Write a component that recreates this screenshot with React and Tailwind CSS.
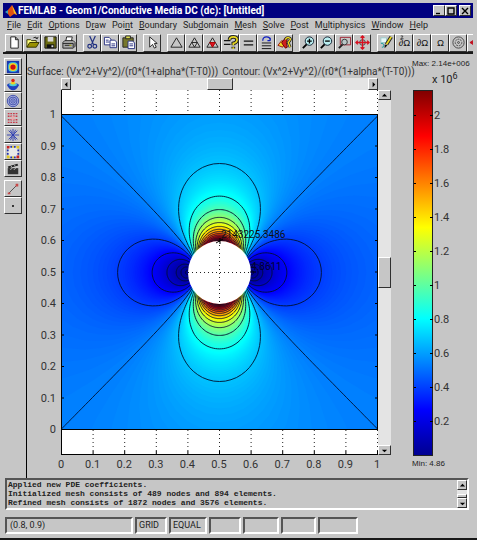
import React from "react";

const SANS = "font-['Roboto','Liberation_Sans',sans-serif]";
const RAISED =
  "border border-t-white border-l-white border-r-[#303030] border-b-[#303030] bg-[#c6c6c6]";
const SUNKEN =
  "border-2 border-t-[#555] border-l-[#555] border-r-white border-b-white";

/* ---------- field around a circular hole in a uniform current ---------- */
const CX = 192.5;
const CY = 182.5;
const R = 31.5;
const LEFT = 34;
const RIGHT = 351;
const TOP = 25;
const BOTTOM = 340;

function jet(t) {
  const ch = (c) =>
    Math.round(255 * Math.max(0, Math.min(1, 1.5 - Math.abs(4 * t - c))));
  return `rgb(${ch(3)},${ch(2)},${ch(1)})`;
}

// Colour of a field level, where 1 is the undisturbed current.
function shade(level) {
  const d = level - 1;
  return jet(0.25 + 0.4 * d + (d < 0 ? 0.17 : -0.052) * d * d);
}

// One point of the level line |1 - R²/z²|² = s², at phase phi.
function point(s, phi, upper) {
  let re = s * Math.cos(phi) - 1;
  let im = s * Math.sin(phi);
  if (!upper) {
    re = -re;
    im = -im;
  }
  const mod = Math.min(R / Math.sqrt(Math.hypot(re, im)), 1500);
  const arg = -Math.atan2(im, re) / 2;
  const x = mod * Math.cos(arg);
  const y = mod * Math.sin(arg);
  return upper ? [-y, x] : [x, y];
}

function lobe(level) {
  const s = Math.sqrt(level);
  const upper = level > 1;
  const max = Math.acos(Math.min(1, s / 2));
  const pts = [];
  for (let i = -36; i <= 36; i++) {
    const t = i / 36;
    pts.push(point(s, max * (0.3 * t + 0.7 * t * t * t), upper));
  }
  const path = (k) =>
    "M" +
    pts
      .map(([x, y]) => `${(CX + k * x).toFixed(1)} ${(CY + k * y).toFixed(1)}`)
      .join("L");
  return path(1) + path(-1);
}

function diagonals() {
  let d = "";
  for (const sx of [1, -1]) {
    for (const sy of [1, -1]) {
      const pts = [];
      for (let i = 0; i <= 40; i++) {
        const r = R + (i / 40) * 196;
        const th = Math.acos((R * R) / (2 * r * r)) / 2;
        pts.push(
          `${(CX + sx * r * Math.cos(th)).toFixed(1)} ${(CY + sy * r * Math.sin(th)).toFixed(1)}`
        );
      }
      d += "M" + pts.join("L");
    }
  }
  return d;
}

const BANDS = [];
for (let c = 0.99; c > 0.01; c -= 0.01) BANDS.push(c);
for (let c = 1.01; c < 3.98; c += c < 1.4 ? 0.01 : 0.03) BANDS.push(c);
const LINES = [0.02, 0.11, 0.22, 0.41, 0.61, 0.818];
for (let k = 0; k < 15; k++) LINES.push(1.174 + k * 0.195);
const TENTHS = [0, 1, 2, 3, 4, 5, 6, 7, 8, 9, 10];

function Plot() {
  return (
    <svg
      width="351"
      height="388"
      className={`block shrink-0 overflow-visible ${SANS}`}
      role="img"
      aria-label="Surface and contour plot"
    >
      <defs>
        <clipPath id="domain">
          <rect x={LEFT} y={TOP} width={RIGHT - LEFT} height={BOTTOM - TOP} />
        </clipPath>
      </defs>
      <rect x={LEFT} y="0" width={RIGHT - LEFT} height="365" fill="#fff" />
      <g clipPath="url(#domain)">
        <rect x={LEFT} y={TOP} width="317" height="315" fill={shade(1)} />
        {BANDS.map((c) => (
          <path key={c} d={lobe(c)} fill={shade(c)} />
        ))}
        <g fill="none" stroke="#001030" strokeWidth="0.9">
          {LINES.map((c) => (
            <path key={c} d={lobe(c)} />
          ))}
          <path d={diagonals()} />
        </g>
      </g>
      <circle cx={CX} cy={CY} r={R} fill="#fff" />
      <g stroke="#222" strokeDasharray="1 3">
        <path d={`M${CX} ${CY - R}V${CY + R}M${CX - R} ${CY}H${CX + R}`} />
        {TENTHS.map((i) => {
          const x = LEFT + 0.5 + i * 31.6;
          return <path key={i} d={`M${x} 0V${TOP}M${x} ${BOTTOM}V365`} />;
        })}
      </g>
      <g stroke="#000" fill="none">
        <path d={`M${LEFT + 0.5} 0V365M${RIGHT - 0.5} ${TOP}V${BOTTOM}`} />
        <path d={`M${LEFT} 24.5H${RIGHT}M${LEFT} 339.5H${RIGHT}M${LEFT} 364.5H${RIGHT}`} />
        {TENTHS.map((i) => (
          <path
            key={i}
            d={`M${LEFT + 0.5 + i * 31.6} 361v4M${LEFT} ${BOTTOM - 0.5 - i * 31.5}h3M${RIGHT} ${BOTTOM - 0.5 - i * 31.5}h-3`}
          />
        ))}
      </g>
      <path d="M189 153l7 -4M193 148v6M223 182h6" stroke="#000" fill="none" />
      <text x="194" y="148" fill="#101010" className="text-[10px]">
        2143225.3486
      </text>
      <text x="224" y="180" fill="#000030" className="text-[10px]">
        4.8611
      </text>
      <g fill="#333" className="text-[11px]">
        {TENTHS.map((i) => (
          <text key={i} x="29" y={BOTTOM + 3 - i * 31.5} textAnchor="end">
            {i / 10}
          </text>
        ))}
        {TENTHS.map((i) => (
          <text key={i} x={LEFT + i * 31.6} y="378" textAnchor="middle">
            {i / 10}
          </text>
        ))}
      </g>
    </svg>
  );
}

const BAR_LABELS = ["2", "1.8", "1.6", "1.4", "1.2", "1", "0.8", "0.6", "0.4", "0.2"];

function ColorBar() {
  return (
    <svg width="48" height="366" className={`block text-[11px] ${SANS}`} role="img" aria-label="Colour scale">
      <defs>
        <linearGradient id="jet" x1="0" y1="1" x2="0" y2="0">
          <stop offset="0" stopColor="#00008f" />
          <stop offset="0.125" stopColor="#0000ff" />
          <stop offset="0.375" stopColor="#00ffff" />
          <stop offset="0.625" stopColor="#ffff00" />
          <stop offset="0.875" stopColor="#ff0000" />
          <stop offset="1" stopColor="#800000" />
        </linearGradient>
      </defs>
      <rect x="0.5" y="0.5" width="19" height="365" fill="url(#jet)" stroke="#222" />
      {BAR_LABELS.map((t, i) => (
        <g key={t}>
          <path d={`M1 ${25.5 + i * 34}h2M17 ${25.5 + i * 34}h3`} stroke="#000" />
          <text x="21" y={29 + i * 34} fill="#333">
            {t}
          </text>
        </g>
      ))}
    </svg>
  );
}

/* ------------------------------- icons ------------------------------- */
const Tri = ({ children }) => (
  <>
    <path d="M8 3L14 13H2z" fill="none" stroke="#222" />
    {children}
  </>
);
const Lens = ({ children }) => (
  <>
    <path d="M6.500 9.500L2 14" stroke="#000" strokeWidth="2" />
    <circle cx="9" cy="6.500" r="4.500" fill="#b9eef0" stroke="#123" />
    {children}
  </>
);
const Glyph = ({ children }) => (
  <text x="8" y="12" textAnchor="middle" fill="#111" fontSize="10" fontFamily="Liberation Sans, sans-serif">
    {children}
  </text>
);

const ICONS = {
  New: <path d="M4 2h5l3 3v9H4zM9 2v3h3" fill="#fff" stroke="#222" />,
  Open: (
    <>
      <path d="M2 13V5h4l1 1h5v3" fill="#ffff80" stroke="#333300" />
      <path d="M2 13l3-5h10l-3 5z" fill="#999000" stroke="#333300" />
      <path d="M9 3q3-2 4 1m0 0l1-2m-1 2l-2-1" stroke="#222" fill="none" />
    </>
  ),
  Save: (
    <>
      <path d="M2 2h12v12H2z" fill="#6b6b10" stroke="#111" />
      <path d="M5 2h6v5H5z" fill="#d8d8d8" />
      <path d="M4 10h8v4H4z" fill="#111" />
      <path d="M9 11h2v2H9z" fill="#ddd" />
    </>
  ),
  Print: (
    <>
      <path d="M5 7l1-5h6l-1 5" fill="#fff" stroke="#222" />
      <path d="M2 8l2-2h9l2 2v4l-2 2H2z" fill="#aaa" stroke="#222" />
      <path d="M2 9h11v4M4 11h7" stroke="#222" fill="none" />
      <path d="M9 11h2" stroke="#cc0" />
    </>
  ),
  Cut: (
    <>
      <path d="M5 1l4 9M11 1L7 10" stroke="#203080" fill="none" strokeWidth="1.300" />
      <circle cx="5" cy="12" r="2" fill="none" stroke="#203080" strokeWidth="1.300" />
      <circle cx="10.500" cy="12" r="2" fill="none" stroke="#203080" strokeWidth="1.300" />
    </>
  ),
  Copy: (
    <g fill="#fff" stroke="#283080">
      <path d="M1.500 2.500h5l2 2v6h-7zM3 5.500h3M3 7.500h4" />
      <path d="M7.500 5.500h5l2 2v6h-7zM9 9.500h4M9 11.500h4" />
    </g>
  ),
  Paste: (
    <>
      <path d="M2 3h11v10H2z" fill="#77772a" stroke="#222" />
      <path d="M5 1h5v3H5z" fill="#dddd50" stroke="#222" />
      <path d="M7.500 6.500h5l2 2v6h-7zM9 9.500h4M9 11.500h4" fill="#fff" stroke="#283080" />
    </>
  ),
  Select: <path d="M5 2v11l3-3 2 4 2-1-2-4h3z" fill="#fff" stroke="#222" />,
  Triangle: <Tri />,
  Mesh1: (
    <Tri>
      <path d="M5 8h6L8 13z" fill="none" stroke="#222" />
    </Tri>
  ),
  Mesh2: (
    <Tri>
      <path d="M5 8h6L8 13z" fill="#e01020" stroke="#a00" />
    </Tri>
  ),
  "Solve help": (
    <>
      <path d="M1 6h7M1 10h7" stroke="#111" strokeWidth="1.500" />
      <path d="M7 5q0-3 4-3t4 3-4 4v2M11 12.500v2" fill="none" stroke="#222" strokeWidth="4" />
      <path d="M7 5q0-3 4-3t4 3-4 4v2M11 13v2" fill="none" stroke="#e8d820" strokeWidth="1.800" />
    </>
  ),
  Equal: <path d="M3 6.500h10M3 10.500h10" stroke="#111" strokeWidth="1.500" />,
  Restart: (
    <>
      <path d="M3 8.500h10M3 11.500h10M3 14.500h10" stroke="#111" />
      <path d="M4 6q0-4 4-4t4 4m0 0V3m0 3H9" stroke="#1020c0" fill="none" strokeWidth="1.300" />
    </>
  ),
  Parameters: (
    <>
      <path d="M1 11l4-5 4 2-3 5z" fill="#f0d820" stroke="#a01010" />
      <path d="M5 8l4-5 2 2-1 3 1 5-2 1-3-4z" fill="#d02020" stroke="#600" />
      <path d="M9 5q1-3 4-2t-1 5l2 5" stroke="#222" fill="none" strokeWidth="3" />
      <path d="M9 5q1-3 4-2t-1 5l2 5" stroke="#f0d820" fill="none" strokeWidth="1.500" />
    </>
  ),
  "Zoom in": (
    <Lens>
      <path d="M6.500 6.500h5M9 4v5" stroke="#000" strokeWidth="1.400" />
    </Lens>
  ),
  "Zoom out": (
    <Lens>
      <path d="M6.500 6.500h5" stroke="#000" strokeWidth="1.400" />
    </Lens>
  ),
  "Zoom window": (
    <>
      <path d="M3.500 2.500h11v8h-11z" fill="none" stroke="#a02030" />
      <path d="M6 10l-4 4" stroke="#222" strokeWidth="2" />
      <circle cx="8" cy="7.500" r="3" fill="#b9c8c8" stroke="#333" />
    </>
  ),
  "Zoom extents": (
    <>
      <circle cx="8" cy="8" r="3" fill="#bbb" stroke="#444" />
      <path d="M8 1v14M1 8h14M6 3l2-2 2 2M6 13l2 2 2-2M3 6L1 8l2 2M13 6l2 2-2 2" fill="none" stroke="#d81020" strokeWidth="1.400" />
    </>
  ),
  "Draw mode": (
    <>
      <path d="M2 3h6v5H2z" fill="#e8f8f8" stroke="#9cc" />
      <path d="M13 2L8 10" stroke="#222" strokeWidth="4" />
      <path d="M13 2L8 10" stroke="#e8d820" strokeWidth="2" />
      <path d="M6 10l3 1-3 3z" fill="#111" />
      <path d="M2 9q3-1 3 2t-2 2" stroke="#20a0a0" fill="none" />
    </>
  ),
  "Point mode": (
    <>
      <Glyph>∂Ω</Glyph>
      <path d="M4 1h2v1L4 4h3" stroke="#222" fill="none" strokeWidth="0.800" />
    </>
  ),
  "Boundary mode": <Glyph>∂Ω</Glyph>,
  "Subdomain mode": <Glyph>Ω</Glyph>,
  "Plot mode": (
    <g fill="none" stroke="#444">
      <circle cx="8" cy="8" r="6" />
      <circle cx="8" cy="8" r="3.500" strokeDasharray="2 1" />
      <circle cx="8" cy="8" r="1" />
    </g>
  ),
  Arrow: <path d="M1 8h6M1 8l3-2v4z" stroke="#c01020" fill="#c01020" />,
  Surface: (
    <>
      <path d="M1 1h14v14H1z" fill="#1838b0" />
      <rect x="2.500" y="2.500" width="11" height="11" rx="4" fill="#40c8e0" />
      <circle cx="8" cy="8" r="4.500" fill="#f0d020" />
      <circle cx="8" cy="8" r="3" fill="#d01010" />
    </>
  ),
  "Height plot": (
    <>
      <path d="M1 9q3-3 7 0 4-3 7 0-3 6-7 6T1 9z" fill="#2040c0" />
      <path d="M3 9q5 3 10 0l-2-2H5z" fill="#50d0d0" />
      <path d="M5 7q3 3 6 0L9 5H7z" fill="#f0d020" />
      <circle cx="8" cy="4" r="2" fill="#e02010" />
    </>
  ),
  Contour: (
    <g fill="none" stroke="#3848a8">
      <circle cx="8" cy="8" r="6.500" fill="#a8b0e0" />
      <circle cx="8" cy="8" r="4.500" />
      <circle cx="8" cy="8" r="2.500" />
      <circle cx="8" cy="8" r="0.500" />
    </g>
  ),
  "Arrow plot": (
    <>
      <path d="M2 3h12M2 6h12M2 10h12M2 13h12" stroke="#c83848" strokeWidth="1.500" strokeDasharray="2 1" />
      <path d="M6 6h4v4H6z" fill="#e8b0b0" />
    </>
  ),
  Flow: (
    <path d="M8 1v14M1 8h14M3 3l10 10M13 3L3 13M5 2l2 4M11 2L9 6M5 14l2-4M11 14l-2-4" stroke="#2838b0" fill="none" />
  ),
  Deform: (
    <>
      <path d="M2.500 2.500h11v11h-11z" fill="#e8e8e8" />
      <path d="M5 1h2v2H5zM9 1h2v2H9zM5 13h2v2H5zM9 13h2v2H9zM1 5h2v2H1zM1 9h2v2H1zM13 5h2v2h-2zM13 9h2v2h-2z" fill="#2030b0" />
      <path d="M1 1h3v3H1zM12 12h3v3h-3z" fill="#c82020" />
      <path d="M12 1h3v3h-3zM1 12h3v3H1zM7 1h2v2H7zM7 13h2v2H7z" fill="#e0c820" />
    </>
  ),
  Animate: (
    <>
      <path d="M2 7h12v7H2z" fill="#333" />
      <path d="M2 5l11-3 1 2L3 7z" fill="#222" />
      <path d="M5 4l2 2M9 3l2 2M5 9l2-2M9 9l2-2" stroke="#ccc" />
    </>
  ),
  "Line plot": (
    <>
      <path d="M3 13L13 3" stroke="#444" />
      <path d="M2 12h3v2H2zM11 2h3v3h-3z" fill="#c84848" />
    </>
  ),
  "Point plot": <circle cx="8" cy="8" r="1.200" fill="#111" />,
};

function ToolButton({ name, side }) {
  return (
    <button
      type="button"
      aria-label={name}
      className={`flex shrink-0 items-center justify-center ${side ? "h-[17px]" : "h-[18px]"} w-[18px] ${RAISED}`}
    >
      <svg width={side ? 14 : 15} height={side ? 14 : 15} viewBox="0 0 16 16" className="shrink-0">
        {ICONS[name]}
      </svg>
    </button>
  );
}

const GROUPS = [
  ["New", "Open", "Save", "Print"],
  ["Cut", "Copy", "Paste"],
  ["Select"],
  ["Triangle", "Mesh1", "Mesh2", "Solve help", "Equal", "Restart", "Parameters"],
  ["Zoom in", "Zoom out", "Zoom window", "Zoom extents"],
  ["Draw mode", "Point mode", "Boundary mode", "Subdomain mode", "Plot mode", "Arrow"],
];

// Each entry: text before the access key, the key, text after it.
const MENUS = [
  ["", "F", "ile"],
  ["", "E", "dit"],
  ["", "O", "ptions"],
  ["D", "r", "aw"],
  ["Poi", "n", "t"],
  ["", "B", "oundary"],
  ["Sub", "d", "omain"],
  ["", "M", "esh"],
  ["", "S", "olve"],
  ["", "P", "ost"],
  ["M", "u", "ltiphysics"],
  ["", "W", "indow"],
  ["", "H", "elp"],
];

const ARROWS = {
  left: "M5 1v6L2 4z",
  right: "M3 1v6l3-3z",
  up: "M1 5h6L4 2z",
  down: "M1 3h6L4 6z",
};

function ScrollButton({ dir, size }) {
  return (
    <button
      type="button"
      aria-label={`Scroll ${dir}`}
      className={`flex shrink-0 items-center justify-center ${size} ${RAISED}`}
    >
      <svg width="7" height="7" viewBox="0 0 8 8" className="shrink-0">
        <path d={ARROWS[dir]} fill="#000" />
      </svg>
    </button>
  );
}

function CaptionButton({ label, d }) {
  return (
    <button type="button" aria-label={label} className={`flex h-[11px] w-3 items-center justify-center ${RAISED}`}>
      <svg width="8" height="8" viewBox="0 0 8 8" className="shrink-0">
        <path d={d} stroke="#000" fill="none" strokeWidth="1.400" />
      </svg>
    </button>
  );
}

const FORMULA = "(Vx^2+Vy^2)/(r0*(1+alpha*(T-T0)))";

export default function App() {
  return (
    <div
      className={`flex min-h-screen flex-col overflow-hidden border-b-2 border-b-[#181818] bg-[#c6c6c6] pt-[3px] text-[#222] ${SANS}`}
    >
      <header className="ml-[3px] mr-1 flex h-[15px] items-center bg-[#000080] pl-[2px] pr-[2px] text-white">
        <svg width="12" height="12" viewBox="0 0 12 12" className="mr-px shrink-0">
          <path d="M0 7l3-2 2 2-2 2z" fill="#40a0b0" />
          <path d="M3 5l4-5 2 4 3 6-3-1-4 3-2-3z" fill="#e05010" />
          <path d="M7 0l2 4 3 6-3-2z" fill="#f8c020" />
        </svg>
        <h1 className="flex-1 whitespace-nowrap text-[10px] font-bold leading-[15px]">
          FEMLAB - Geom1/Conductive Media DC (dc): [Untitled]
        </h1>
        <CaptionButton label="Minimize" d="M1 6.500h4" />
        <CaptionButton label="Maximize" d="M1 1h6v6H1z" />
        <span className="w-[2px]" />
        <CaptionButton label="Close" d="M1 1l6 6M7 1L1 7" />
      </header>

      <nav className="flex h-[15px] items-center gap-[6px] pl-[7px] text-[9px] leading-[13px]">
        {MENUS.map(([a, k, b]) => (
          <button key={a + k + b} type="button">
            {a}
            <span className="underline">{k}</span>
            {b}
          </button>
        ))}
      </nav>

      <div className="ml-[3px] mr-1 flex h-[21px] items-center gap-[6px] overflow-hidden border-b-2 border-b-[#181818] pl-[2px]">
        {GROUPS.map((g) => (
          <div key={g[0]} className="flex">
            {g.map((n) => (
              <ToolButton key={n} name={n} />
            ))}
          </div>
        ))}
      </div>

      <main className="flex">
        <aside className="flex w-[27px] shrink-0 flex-col items-start border-r border-r-black pl-1 pt-1">
          {["Surface", "Height plot", "Contour", "Arrow plot", "Flow", "Deform", "Animate"].map((n) => (
            <ToolButton key={n} name={n} side />
          ))}
          <div className="mt-[3px]">
            {["Line plot", "Point plot"].map((n) => (
              <ToolButton key={n} name={n} side />
            ))}
          </div>
        </aside>

        <section className="flex">
          <div className="w-[364px]">
            <h2 className="flex h-6 items-end gap-1 whitespace-nowrap text-[10px] leading-[12px] text-[#333]">
              <span>Surface: {FORMULA}</span>
              <span>Contour: {FORMULA}</span>
            </h2>
            <div className="ml-[34px] mr-[13px] flex h-3 justify-between bg-[#e4e4e4]">
              <ScrollButton dir="left" size="h-3 w-[10px]" />
              <div className={`w-[26px] ${RAISED}`} />
              <ScrollButton dir="right" size="h-3 w-[10px]" />
            </div>
            <div className="flex">
              <Plot />
              <div className="flex h-[365px] w-[13px] flex-col justify-between bg-[#e4e4e4]">
                <ScrollButton dir="up" size="h-[10px] w-[13px]" />
                <div className={`h-[31px] ${RAISED}`} />
                <ScrollButton dir="down" size="h-[10px] w-[13px]" />
              </div>
            </div>
          </div>
          <div className="whitespace-nowrap pl-[21px] pt-1 font-['Liberation_Sans',sans-serif] text-[8px] leading-[12px]">
            <p>Max: 2.14e+006</p>
            <p className={`flex h-5 pl-5 pt-[3px] text-[11px] leading-[14px] ${SANS}`}>
              x 10
              <sup className="top-0 text-[9px] leading-[7px]">6</sup>
            </p>
            <div className="pl-px">
              <ColorBar />
            </div>
            <p className="pt-[2px]">Min: 4.86</p>
          </div>
        </section>
      </main>

      <div className={`ml-[5px] mr-2 flex h-8 justify-between ${SUNKEN}`}>
        <div role="log" className="whitespace-nowrap pl-px font-['Liberation_Mono',monospace] text-[8px] font-bold leading-[9px] text-[#222]">
          <p>Applied new PDE coefficients.</p>
          <p>Initialized mesh consists of 489 nodes and 894 elements.</p>
          <p>Refined mesh consists of 1872 nodes and 3576 elements.</p>
        </div>
        <div className="flex w-[10px] flex-col bg-[#e4e4e4]">
          <ScrollButton dir="up" size="h-[10px] w-[10px]" />
          <div className="flex-1" />
          <div className={`h-1 ${RAISED}`} />
          <ScrollButton dir="down" size="h-[10px] w-[10px]" />
        </div>
      </div>

      <footer className="mt-[7px] flex h-[17px] gap-[2px] pl-[5px] text-[9px] leading-[13px]">
        <div className={`w-32 pl-[3px] ${SUNKEN}`}>(0.8, 0.9)</div>
        <div className={`w-8 pl-[2px] ${SUNKEN}`}>GRID</div>
        <div className={`w-[38px] pl-[2px] ${SUNKEN}`}>EQUAL</div>
        <div className={`w-8 ${SUNKEN}`} />
        <div className={`w-9 ${SUNKEN}`} />
        <div className={`w-[35px] ${SUNKEN}`} />
        <div className={`w-10 ${SUNKEN}`} />
      </footer>
    </div>
  );
}
